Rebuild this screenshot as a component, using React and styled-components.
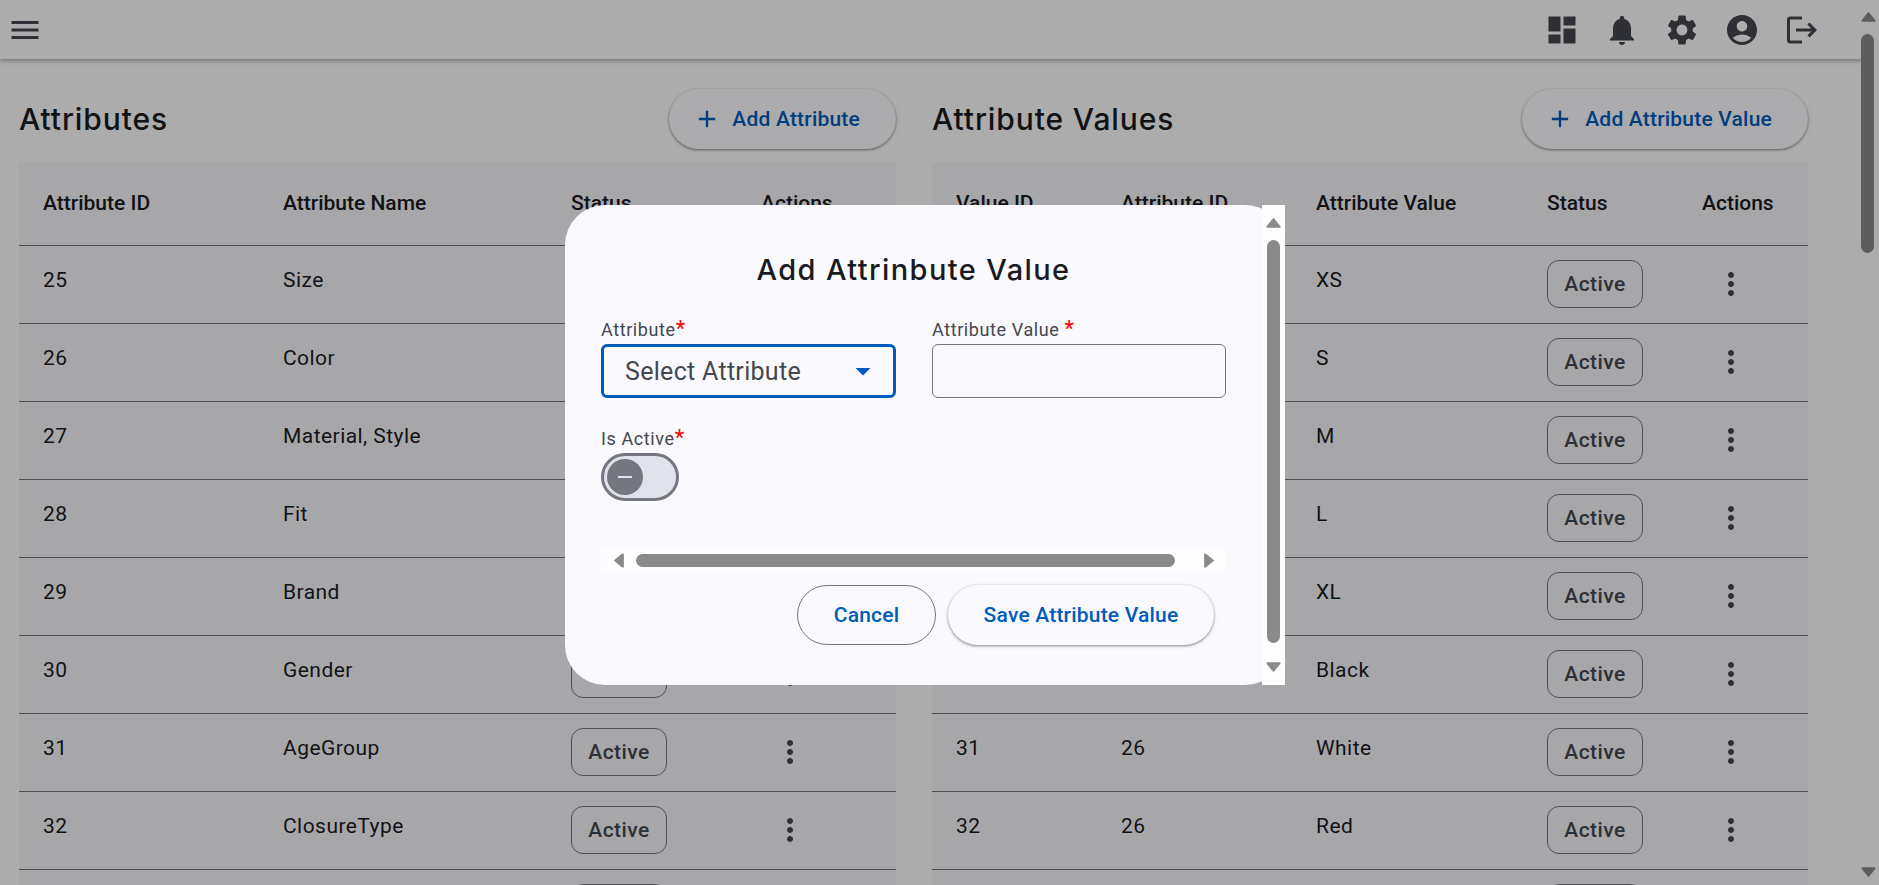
import React from 'react';
import styled, { createGlobalStyle } from 'styled-components';
import { MdMenu, MdDashboard, MdNotifications, MdSettings, MdAccountCircle, MdLogout, MdMoreVert, MdAdd, MdArrowDropDown, MdRemove } from 'react-icons/md';

const Global = createGlobalStyle`
  html, body { margin: 0; height: 100%; overflow: hidden; background: #fefefe; }
  * { box-sizing: border-box; }
  body { font-family: Roboto, "Noto Sans", sans-serif; color: #1a1b1f; }
`;
const Shell = styled.div`display: flex; height: 885px; width: 1879px; overflow: hidden;`;
const Main = styled.div`flex: 1; min-width: 0; display: flex; flex-direction: column;`;
const TopBar = styled.header`
  height: 59px; flex: none; display: flex; align-items: center; justify-content: space-between;
  padding: 0 30px 0 7px; background: #fefefe;
  box-shadow: 0 2px 4px rgba(0,0,0,.25), 0 1px 10px rgba(0,0,0,.08); color: #44474f;
`;
const Menu = styled(MdMenu)`font-size: 36px;`;
const IconRow = styled.div`display: flex;`;
const IconCell = styled.span`width: 60px; height: 60px; display: flex; align-items: center; justify-content: center; font-size: 36px;`;
const Columns = styled.main`display: grid; grid-template-columns: 877px 876px; column-gap: 36px; padding: 30px 0 0 19px; overflow: hidden; flex: 1;`;
const Section = styled.section`min-width: 0;`;
const SectionHead = styled.div`display: flex; justify-content: space-between; align-items: center; height: 60px; margin-bottom: 13px;`;
const Heading = styled.h2`margin: 0; font: 500 30px/40px Inter, sans-serif; letter-spacing: .9px;`;
const PillButton = styled.button`
  height: 60px; border: 0; border-radius: 30px; background: #fdfcff; color: #005cbb;
  font: 500 21px Roboto, sans-serif; letter-spacing: .2px; display: flex; align-items: center; gap: 11px; padding: 0 36px 0 24px;
  box-shadow: 0 1px 3px 1px rgba(0,0,0,.15), 0 1px 2px rgba(0,0,0,.3);
  svg { font-size: 28px; }
`;
const Table = styled.table`width: 100%; border-collapse: collapse; table-layout: fixed; background: #f7f7fb;`;
const Th = styled.th`height: 83px; padding: 0 0 0 24px; border-bottom: 1px solid #74777f; text-align: left; font: 500 21px Roboto, sans-serif;`;
const Td = styled.td`height: 78px; padding: 0 0 8px 24px; border-bottom: 1px solid #74777f; font: 400 21px Roboto, sans-serif; letter-spacing: .45px; vertical-align: middle;`;
const ControlTd = styled(Td)`padding-bottom: 0;`;
const Chip = styled.span`
  display: flex; width: 96px; height: 48px; align-items: center; justify-content: center;
  border: 1px solid #74777f; border-radius: 12px; font: 500 21px Roboto, sans-serif; color: #44474f;
`;
const Kebab = styled(MdMoreVert)`display: block; font-size: 36px; color: #44474f; margin-left: 11px;`;
const ScrollTrack = styled.div`width: 17px; flex: none; background: #fefefe; position: relative;`;
const PageThumb = styled.div`position: absolute; top: 34px; left: -1px; width: 13px; height: 219px; border-radius: 7px; background: #8a8a8a;`;
const Arrow = styled.svg`display: block; position: absolute; fill: #8a8a8a;`;
const Overlay = styled.div`position: fixed; inset: 0; background: rgba(0,0,0,.32); z-index: 5;`;
const Modal = styled.div`
  position: absolute; left: 565px; top: 205px; width: 720px; height: 480px; border-radius: 40px;
  background: #faf9fe; padding: 0 59px 0 36px; color: #1a1b1f;
`;
const ModalTitle = styled.h2`margin: 0; padding-top: 16px; height: 113px; display: flex; align-items: center; justify-content: center; font: 500 29px/40px Inter, sans-serif; letter-spacing: 1.4px;`;
const FieldRow = styled.div`display: grid; grid-template-columns: 295px 294px; column-gap: 36px;`;
const Label = styled.div`font: 400 18px/19px Roboto, sans-serif; color: #44474f; letter-spacing: .6px; height: 26px;`;
const Star = styled.span`color: #f00; font-size: 22px; line-height: 1;`;
const SelectBox = styled.div`
  height: 54px; border: 3px solid #005cbb; border-radius: 6px; display: flex; align-items: center; justify-content: space-between;
  padding: 0 12px 0 21px; font: 400 25px Roboto, sans-serif; color: #44474f; letter-spacing: .3px;
  svg { color: #005cbb; font-size: 36px; }
`;
const InputBox = styled.div`height: 54px; border: 1px solid #74777f; border-radius: 6px;`;
const ActiveBlock = styled.div`margin-top: 29px;`;
const SwitchTrack = styled.div`
  width: 78px; height: 48px; border: 3px solid #74777f; border-radius: 24px; background: #e0e2ec;
  display: flex; align-items: center; padding-left: 3px;
`;
const SwitchThumb = styled.div`width: 36px; height: 36px; border-radius: 50%; background: #74777f; color: #e0e2ec; display: flex; align-items: center; justify-content: center; font-size: 24px;`;
const HScroll = styled.div`position: absolute; left: 36px; top: 344px; width: 625px; height: 23px; background: #fdfdfd;`;
const HThumb = styled.div`position: absolute; left: 35px; top: 5px; width: 539px; height: 13px; border-radius: 7px; background: #8a8a8a;`;
const VScroll = styled.div`position: absolute; right: 0; top: 0; width: 23px; height: 480px; background: #fdfdfd;`;
const VThumb = styled.div`position: absolute; left: 5px; top: 35px; width: 13px; height: 403px; border-radius: 7px; background: #8a8a8a;`;
const Footer = styled.div`position: absolute; left: 232px; top: 380px; display: flex; gap: 12px;`;
const OutlineBtn = styled.button`height: 60px; width: 139px; border: 1px solid #74777f; border-radius: 30px; background: transparent; color: #005cbb; font: 500 21px Roboto, sans-serif; letter-spacing: .2px;`;
const RaisedBtn = styled(OutlineBtn)`width: 266px; border: 0; box-shadow: 0 1px 3px 1px rgba(0,0,0,.15), 0 1px 2px rgba(0,0,0,.3);`;

const leftRows = [[25,'Size'],[26,'Color'],[27,'Material, Style'],[28,'Fit'],[29,'Brand'],[30,'Gender'],[31,'AgeGroup'],[32,'ClosureType']];
const rightRows = [[25,25,'XS'],[26,25,'S'],[27,25,'M'],[28,25,'L'],[29,25,'XL'],[30,26,'Black'],[31,26,'White'],[32,26,'Red']];

function Tri({ dir, style }) {
  const d = { up: 'M7 0.5 L13.5 8.5 Q14 10 12.5 10 L1.5 10 Q0 10 .5 8.5 Z', down: 'M.5 1.5 Q0 0 1.5 0 L12.5 0 Q14 0 13.5 1.5 L7 9.5 Z', left: 'M10 1.5 L10 12.5 Q10 14 8.5 13.5 L.5 7 L8.5 .5 Q10 0 10 1.5Z', right: 'M0 1.5 Q0 0 1.5 .5 L9.5 7 L1.5 13.5 Q0 14 0 12.5Z' }[dir];
  const horizontal = dir === 'left' || dir === 'right';
  return <Arrow width={horizontal ? 11 : 15} height={horizontal ? 15 : 11} viewBox={horizontal ? '0 0 10 14' : '0 0 14 10'} style={style}><path d={d} /></Arrow>;
}

export default function App() {
  return (
    <Shell>
      <Global />
      <Main>
        <TopBar>
          <Menu />
          <IconRow>
            {[MdDashboard, MdNotifications, MdSettings, MdAccountCircle, MdLogout].map((I, i) => <IconCell key={i}><I /></IconCell>)}
          </IconRow>
        </TopBar>
        <Columns>
          <Section>
            <SectionHead>
              <Heading>Attributes</Heading>
              <PillButton><MdAdd />Add Attribute</PillButton>
            </SectionHead>
            <Table>
              <colgroup><col style={{ width: 240 }} /><col style={{ width: 288 }} /><col style={{ width: 190 }} /><col /></colgroup>
              <thead><tr><Th>Attribute ID</Th><Th>Attribute Name</Th><Th>Status</Th><Th>Actions</Th></tr></thead>
              <tbody>
                {leftRows.map(r => (
                  <tr key={r[0]}><Td>{r[0]}</Td><Td>{r[1]}</Td><ControlTd><Chip>Active</Chip></ControlTd><ControlTd><Kebab /></ControlTd></tr>
                ))}
                <tr><Td /><Td /><ControlTd><Chip /></ControlTd><ControlTd /></tr>
              </tbody>
            </Table>
          </Section>
          <Section>
            <SectionHead>
              <Heading>Attribute Values</Heading>
              <PillButton><MdAdd />Add Attribute Value</PillButton>
            </SectionHead>
            <Table>
              <colgroup><col style={{ width: 165 }} /><col style={{ width: 195 }} /><col style={{ width: 231 }} /><col style={{ width: 155 }} /><col /></colgroup>
              <thead><tr><Th>Value ID</Th><Th>Attribute ID</Th><Th>Attribute Value</Th><Th>Status</Th><Th>Actions</Th></tr></thead>
              <tbody>
                {rightRows.map(r => (
                  <tr key={r[0]}><Td>{r[0]}</Td><Td>{r[1]}</Td><Td>{r[2]}</Td><ControlTd><Chip>Active</Chip></ControlTd><ControlTd><Kebab /></ControlTd></tr>
                ))}
                <tr><Td /><Td /><Td /><ControlTd><Chip /></ControlTd><ControlTd /></tr>
              </tbody>
            </Table>
          </Section>
        </Columns>
      </Main>
      <ScrollTrack>
        <PageThumb />
        <Tri dir="up" style={{ top: 11, left: -1 }} />
        <Tri dir="down" style={{ top: 867, left: -1 }} />
      </ScrollTrack>
      <Overlay>
        <Modal>
          <ModalTitle>Add Attrinbute Value</ModalTitle>
          <FieldRow>
            <div>
              <Label>Attribute<Star>*</Star></Label>
              <SelectBox>Select Attribute<MdArrowDropDown /></SelectBox>
            </div>
            <div>
              <Label>Attribute Value <Star>*</Star></Label>
              <InputBox />
            </div>
          </FieldRow>
          <ActiveBlock>
            <Label>Is Active<Star>*</Star></Label>
            <SwitchTrack><SwitchThumb><MdRemove /></SwitchThumb></SwitchTrack>
          </ActiveBlock>
          <HScroll>
            <Tri dir="left" style={{ left: 12, top: 4 }} />
            <HThumb />
            <Tri dir="right" style={{ left: 603, top: 4 }} />
          </HScroll>
          <Footer>
            <OutlineBtn>Cancel</OutlineBtn>
            <RaisedBtn>Save Attribute Value</RaisedBtn>
          </Footer>
          <VScroll>
            <Tri dir="up" style={{ left: 4, top: 12 }} />
            <VThumb />
            <Tri dir="down" style={{ left: 4, top: 457 }} />
          </VScroll>
        </Modal>
      </Overlay>
    </Shell>
  );
}
